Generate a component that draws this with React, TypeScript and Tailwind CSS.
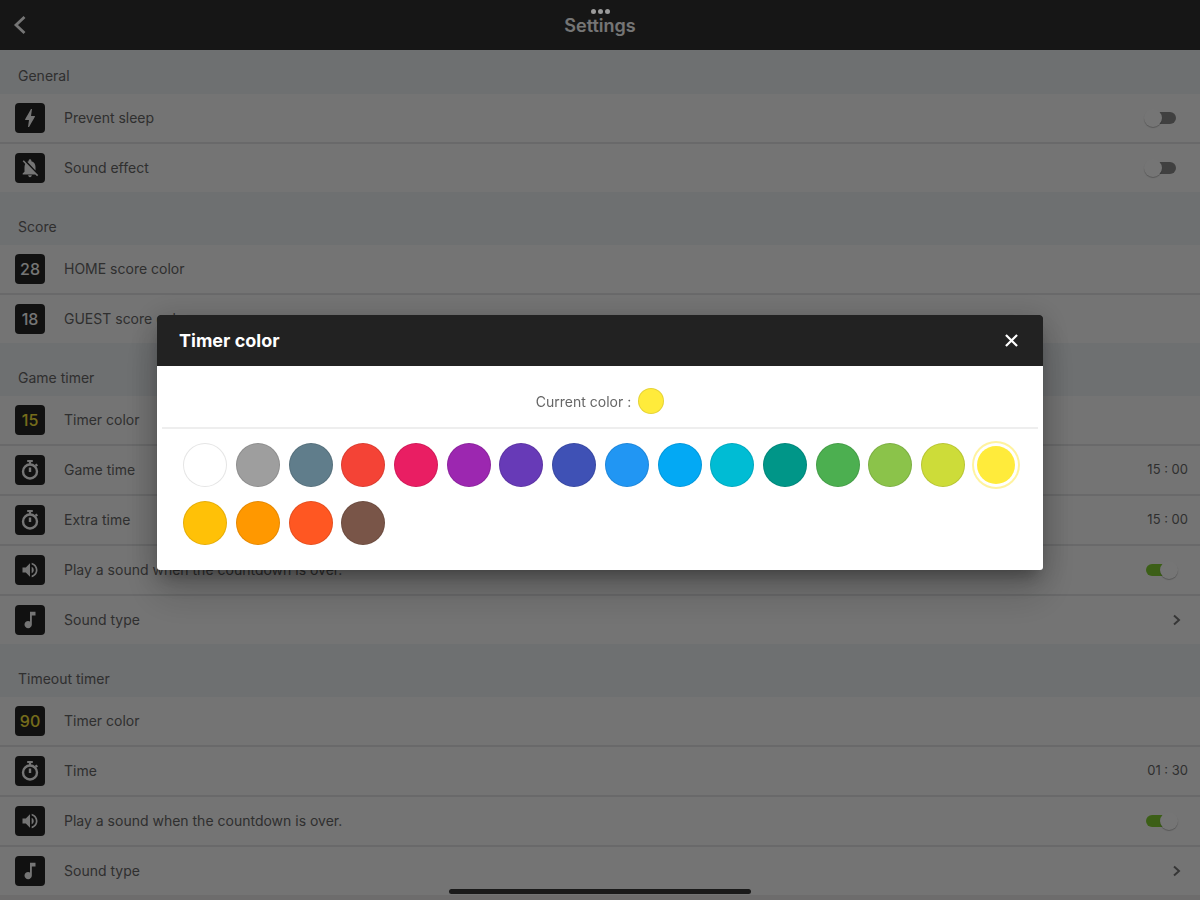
import { useState } from "react";
import type { ReactNode } from "react";
import { MdBolt, MdNotificationsOff, MdVolumeUp, MdMusicNote } from "react-icons/md";

function Tile({ children }: { children: ReactNode }) {
  return (
    <span className="flex size-[30px] shrink-0 items-center justify-center rounded-[4px] bg-[#262626] text-[16px] font-medium text-white">
      {children}
    </span>
  );
}

const rowClass = "flex h-12 w-full items-center gap-[19px] bg-[#fdfdfd] pr-3 pl-[15px] text-left";

function SwitchRow({ id, icon, label, initial }: { id: string; icon: ReactNode; label: string; initial: boolean }) {
  const [on, setOn] = useState(initial);
  return (
    <div className={rowClass}>
      <Tile>{icon}</Tile>
      <label htmlFor={id} className="flex-1 pb-[2px]">
        {label}
      </label>
      <input
        id={id}
        type="checkbox"
        role="switch"
        checked={on}
        onChange={(e) => setOn(e.target.checked)}
        className="relative mr-3 h-3 w-8 shrink-0 appearance-none rounded-full bg-linear-to-r from-transparent from-30% to-[#8c8c8c] to-30% before:absolute before:-top-[3px] before:left-0 before:size-[18px] before:rounded-full before:bg-white before:shadow-[0_1px_1px_rgba(0,0,0,0.25)] checked:mr-[10px] checked:from-[#84d034] checked:from-70% checked:to-transparent checked:to-70% checked:before:left-[14px]"
      />
    </div>
  );
}

function LinkRow({ icon, label, end }: { icon: ReactNode; label: string; end?: ReactNode }) {
  return (
    <button type="button" className={rowClass}>
      <Tile>{icon}</Tile>
      <span className="flex-1 pb-[2px]">{label}</span>
      {end}
    </button>
  );
}

function Section({ title, first, children }: { title: string; first?: boolean; children: ReactNode }) {
  return (
    <section>
      <h2 className={`flex items-end bg-[#eff3f6] pb-[10px] pl-[18px] leading-4 ${first ? "h-11" : "h-[53px]"}`}>
        {title}
      </h2>
      <div className="flex flex-col gap-[2px] bg-[#e4e5e6]">{children}</div>
    </section>
  );
}

function Time({ value }: { value: string }) {
  return <span className="text-[13px]">{value}</span>;
}

function Stopwatch() {
  return (
    <svg viewBox="0 0 22 22" className="size-[22px]" fill="none" stroke="currentColor">
      <circle cx="11" cy="12.500" r="7" strokeWidth="2.4" />
      <path d="M8.200 2h5.600M11 2v3.500M16.500 5.200l1.800 1.800" strokeWidth="2.200" />
      <path d="M11 8.500v4.500" strokeWidth="2.400" />
    </svg>
  );
}

function Chevron() {
  return (
    <svg viewBox="0 0 10 12" className="mr-[6px] h-3 w-[10px]" fill="none" stroke="#777" strokeWidth="2">
      <path d="M2 1.500l5 4.500-5 4.500" />
    </svg>
  );
}

const swatches = [
  { name: "White", color: "#ffffff" },
  { name: "Grey", color: "#9e9e9e" },
  { name: "Blue grey", color: "#607d8b" },
  { name: "Red", color: "#f44336" },
  { name: "Pink", color: "#e91e63" },
  { name: "Purple", color: "#9c27b0" },
  { name: "Deep purple", color: "#673ab7" },
  { name: "Indigo", color: "#3f51b5" },
  { name: "Blue", color: "#2196f3" },
  { name: "Light blue", color: "#03a9f4" },
  { name: "Cyan", color: "#00bcd4" },
  { name: "Teal", color: "#009688" },
  { name: "Green", color: "#4caf50" },
  { name: "Light green", color: "#8bc34a" },
  { name: "Lime", color: "#cddc39" },
  { name: "Yellow", color: "#ffeb3b" },
  { name: "Amber", color: "#ffc107" },
  { name: "Orange", color: "#ff9800" },
  { name: "Deep orange", color: "#ff5722" },
  { name: "Brown", color: "#795548" },
];

function ColorDialog({ color, onPick }: { color: string; onPick: (c: string) => void }) {
  return (
    <div
      role="dialog"
      aria-labelledby="dialog-title"
      className="w-full max-w-[886px] overflow-hidden rounded-[3px] bg-white shadow-[0_11px_15px_-7px_rgba(0,0,0,0.3),0_24px_38px_3px_rgba(0,0,0,0.16),0_4px_30px_4px_rgba(0,0,0,0.16)]"
    >
      <header className="flex h-[51px] items-center justify-between bg-[#222] pr-[21px] pl-[22px] text-white">
        <h2 id="dialog-title" className="text-[18px] font-bold">
          Timer color
        </h2>
        <button type="button" aria-label="Close" className="p-1">
          <svg viewBox="0 0 14 14" className="size-[13px]" fill="none" stroke="currentColor" strokeWidth="2.4">
            <path d="M1 1l12 12M13 1L1 13" />
          </svg>
        </button>
      </header>
      <div className="mx-[5px] flex items-center justify-center gap-[7px] border-b-2 border-[#eee] pt-[22px] pb-[13px]">
        <span className="text-[#666]">Current color :</span>
        <span className="size-[26px] rounded-full border border-black/10" style={{ backgroundColor: color }} />
      </div>
      <div className="grid grid-cols-[repeat(16,minmax(0,1fr))] pt-[7px] pr-[21px] pb-[18px] pl-[22px]">
        {swatches.map((s) => (
          <div key={s.name} className="flex h-[58px] items-center justify-center">
            <button
              type="button"
              aria-label={s.name}
              aria-pressed={s.color === color}
              onClick={() => onPick(s.color)}
              className="size-11 shrink-0 rounded-full border border-black/10 aria-pressed:size-[38px] aria-pressed:border-0 aria-pressed:ring-2 aria-pressed:ring-[#fff3a0] aria-pressed:ring-offset-3"
              style={{ backgroundColor: s.color }}
            />
          </div>
        ))}
      </div>
    </div>
  );
}

export default function App() {
  const [color, setColor] = useState("#ffeb3b");
  const timer = <Stopwatch />;
  const volume = <MdVolumeUp size={20} />;
  const note = <MdMusicNote size={22} />;
  return (
    <div className="relative min-h-screen bg-[#eeecec] font-['Inter','Liberation_Sans',sans-serif] text-[14px] font-normal text-[#686868]">
      <header className="grid h-[50px] grid-cols-[1fr_auto_1fr] items-center bg-[#303030] text-white">
        <button type="button" aria-label="Back" className="w-10 pl-[13px]">
          <svg viewBox="0 0 14 20" className="h-5 w-[14px]" fill="none" stroke="currentColor" strokeWidth="2.8">
            <path d="M11.500 2L3 10l8.500 8" />
          </svg>
        </button>
        <h1 className="text-[18px] font-semibold">Settings</h1>
      </header>

      <main>
        <Section title="General" first>
          <SwitchRow id="sleep" icon={<MdBolt size={24} />} label="Prevent sleep" initial={false} />
          <SwitchRow id="effect" icon={<MdNotificationsOff size={22} />} label="Sound effect" initial={false} />
        </Section>
        <Section title="Score">
          <LinkRow icon="28" label="HOME score color" />
          <LinkRow icon="18" label="GUEST score color" />
        </Section>
        <Section title="Game timer">
          <LinkRow icon={<span style={{ color }}>15</span>} label="Timer color" />
          <LinkRow icon={timer} label="Game time" end={<Time value="15 : 00" />} />
          <LinkRow icon={timer} label="Extra time" end={<Time value="15 : 00" />} />
          <SwitchRow id="game-sound" icon={volume} label="Play a sound when the countdown is over." initial />
          <LinkRow icon={note} label="Sound type" end={<Chevron />} />
        </Section>
        <Section title="Timeout timer">
          <LinkRow icon={<span className="text-[#ffeb3b]">90</span>} label="Timer color" />
          <LinkRow icon={timer} label="Time" end={<Time value="01 : 30" />} />
          <SwitchRow id="timeout-sound" icon={volume} label="Play a sound when the countdown is over." initial />
          <LinkRow icon={note} label="Sound type" end={<Chevron />} />
        </Section>
      </main>

      <div className="fixed inset-0 flex items-center justify-center bg-black/54 px-4 pb-[15px]">
        <ColorDialog color={color} onPick={setColor} />
      </div>

      <div className="fixed inset-x-0 top-[9px] flex justify-center gap-[2px]">
        <span className="size-[5px] rounded-full bg-[#9a9a9a]" />
        <span className="size-[5px] rounded-full bg-[#9a9a9a]" />
        <span className="size-[5px] rounded-full bg-[#9a9a9a]" />
      </div>
      <div className="fixed inset-x-0 bottom-[6px] flex justify-center">
        <span className="h-[5px] w-[302px] rounded-full bg-[#1a1a1a]" />
      </div>
    </div>
  );
}
